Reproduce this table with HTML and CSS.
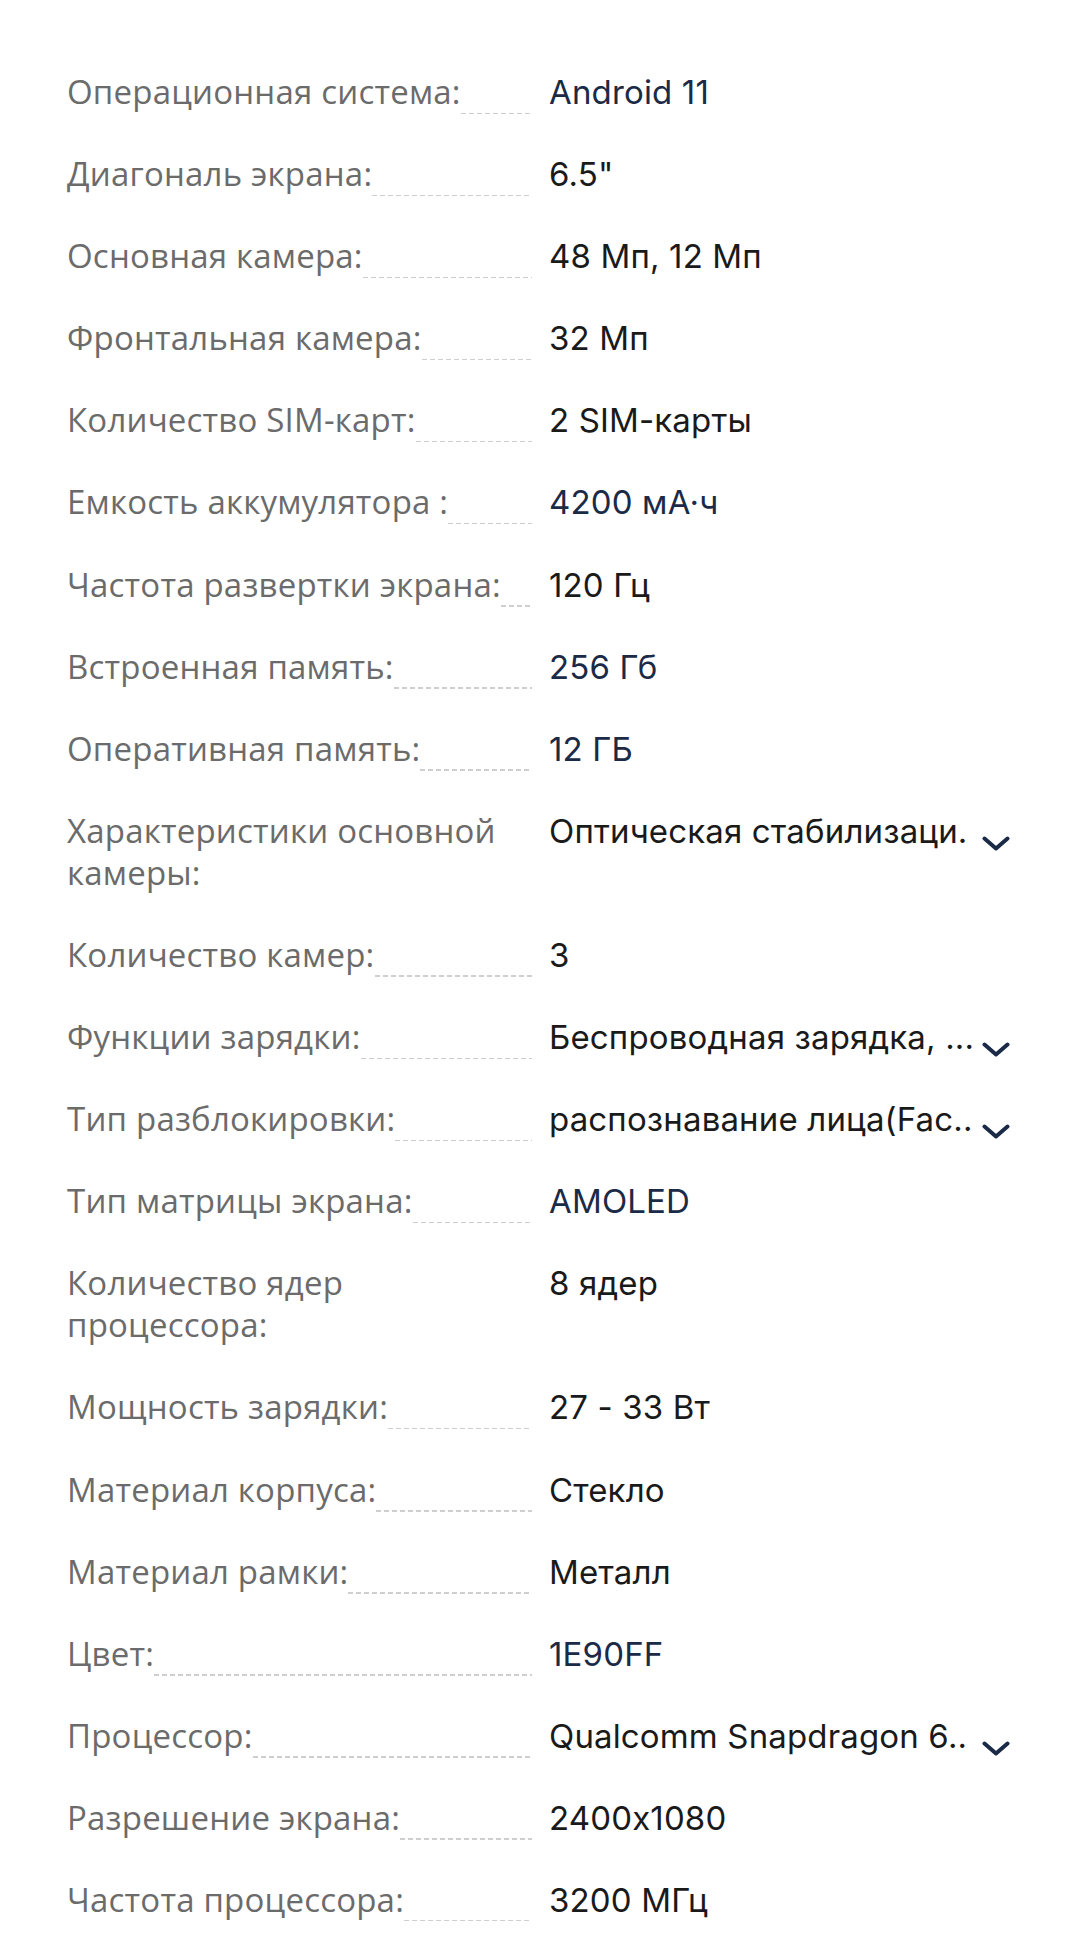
FILE: index.html
```html
<!DOCTYPE html>
<html lang="ru">
<head>
<meta charset="utf-8">
<title>Характеристики</title>
<link rel="stylesheet" href="styles.css">
</head>
<body>
<div class="specs">
  <div class="row"><div class="label"><span class="ltext">Операционная система:</span><span class="dots"></span></div><div class="value"><span class="vtext link">Android 11</span></div></div>
  <div class="row"><div class="label"><span class="ltext">Диагональ экрана:</span><span class="dots"></span></div><div class="value"><span class="vtext">6.5"</span></div></div>
  <div class="row"><div class="label"><span class="ltext">Основная камера:</span><span class="dots"></span></div><div class="value"><span class="vtext">48 Мп, 12 Мп</span></div></div>
  <div class="row"><div class="label"><span class="ltext">Фронтальная камера:</span><span class="dots"></span></div><div class="value"><span class="vtext">32 Мп</span></div></div>
  <div class="row"><div class="label"><span class="ltext">Количество SIM-карт:</span><span class="dots"></span></div><div class="value"><span class="vtext">2 SIM-карты</span></div></div>
  <div class="row"><div class="label"><span class="ltext">Емкость аккумулятора :</span><span class="dots"></span></div><div class="value"><span class="vtext link">4200 мА·ч</span></div></div>
  <div class="row"><div class="label"><span class="ltext">Частота развертки экрана:</span><span class="dots"></span></div><div class="value"><span class="vtext">120 Гц</span></div></div>
  <div class="row"><div class="label"><span class="ltext">Встроенная память:</span><span class="dots"></span></div><div class="value"><span class="vtext link">256 Гб</span></div></div>
  <div class="row"><div class="label"><span class="ltext">Оперативная память:</span><span class="dots"></span></div><div class="value"><span class="vtext link">12 ГБ</span></div></div>
  <div class="row"><div class="label"><span class="ltext">Характеристики основной камеры:</span><span class="dots"></span></div><div class="value"><span class="vtext">Оптическая стабилизаци.</span><svg class="chev" viewBox="0 0 28 15" width="28" height="15"><path d="M2.5 2.5 L14 12.5 L25.5 2.5" fill="none" stroke="#1b2a47" stroke-width="4" stroke-linecap="round" stroke-linejoin="round"/></svg></div></div>
  <div class="row"><div class="label"><span class="ltext">Количество камер:</span><span class="dots"></span></div><div class="value"><span class="vtext">3</span></div></div>
  <div class="row"><div class="label"><span class="ltext">Функции зарядки:</span><span class="dots"></span></div><div class="value"><span class="vtext">Беспроводная зарядка, ...</span><svg class="chev" viewBox="0 0 28 15" width="28" height="15"><path d="M2.5 2.5 L14 12.5 L25.5 2.5" fill="none" stroke="#1b2a47" stroke-width="4" stroke-linecap="round" stroke-linejoin="round"/></svg></div></div>
  <div class="row"><div class="label"><span class="ltext">Тип разблокировки:</span><span class="dots"></span></div><div class="value"><span class="vtext">распознавание лица(Fac..</span><svg class="chev" viewBox="0 0 28 15" width="28" height="15"><path d="M2.5 2.5 L14 12.5 L25.5 2.5" fill="none" stroke="#1b2a47" stroke-width="4" stroke-linecap="round" stroke-linejoin="round"/></svg></div></div>
  <div class="row"><div class="label"><span class="ltext">Тип матрицы экрана:</span><span class="dots"></span></div><div class="value"><span class="vtext link">AMOLED</span></div></div>
  <div class="row"><div class="label"><span class="ltext">Количество ядер процессора:</span><span class="dots"></span></div><div class="value"><span class="vtext">8 ядер</span></div></div>
  <div class="row"><div class="label"><span class="ltext">Мощность зарядки:</span><span class="dots"></span></div><div class="value"><span class="vtext">27 - 33 Вт</span></div></div>
  <div class="row"><div class="label"><span class="ltext">Материал корпуса:</span><span class="dots"></span></div><div class="value"><span class="vtext">Стекло</span></div></div>
  <div class="row"><div class="label"><span class="ltext">Материал рамки:</span><span class="dots"></span></div><div class="value"><span class="vtext">Металл</span></div></div>
  <div class="row"><div class="label"><span class="ltext">Цвет:</span><span class="dots"></span></div><div class="value"><span class="vtext link">1E90FF</span></div></div>
  <div class="row"><div class="label"><span class="ltext">Процессор:</span><span class="dots"></span></div><div class="value"><span class="vtext">Qualcomm Snapdragon 6..</span><svg class="chev" viewBox="0 0 28 15" width="28" height="15"><path d="M2.5 2.5 L14 12.5 L25.5 2.5" fill="none" stroke="#1b2a47" stroke-width="4" stroke-linecap="round" stroke-linejoin="round"/></svg></div></div>
  <div class="row"><div class="label"><span class="ltext">Разрешение экрана:</span><span class="dots"></span></div><div class="value"><span class="vtext">2400x1080</span></div></div>
  <div class="row"><div class="label"><span class="ltext">Частота процессора:</span><span class="dots"></span></div><div class="value"><span class="vtext">3200 МГц</span></div></div>
</div>
</body>
</html>
```

FILE: styles.css
```css
html, body {
  margin: 0;
  padding: 0;
  background: #ffffff;
}

.specs {
  padding: 71px 70px 0 67px;
  display: flex;
  flex-direction: column;
  gap: 40.1px;
}

.row {
  display: grid;
  grid-template-columns: 465px 1fr;
  column-gap: 17px;
  align-items: start;
}

.label {
  display: flex;
  align-items: flex-end;
  min-width: 0;
}

.ltext {
  flex: 0 1 auto;
  font-family: "Open Sans", "DejaVu Sans", sans-serif;
  font-size: 33px;
  line-height: 42px;
  color: #6b6b6b;
  letter-spacing: 0.2px;
}

.dots {
  flex: 1 1 0;
  min-width: 0;
  height: 1.5px;
  margin-bottom: -1px;
  background-image: repeating-linear-gradient(to right, #cfcfcf 0, #cfcfcf 5px, transparent 5px, transparent 8px);
}

.value {
  display: flex;
  align-items: flex-start;
  justify-content: space-between;
  min-width: 0;
  height: 42px;
}

.vtext {
  font-family: Inter, "Noto Sans", sans-serif;
  font-feature-settings: "calt" 0;
  font-size: 33px;
  line-height: 42px;
  letter-spacing: 0.15px;
  color: #1a1a1a;
  white-space: nowrap;
  overflow: hidden;
}

.vtext.link {
  color: #1b2a47;
}

.chev {
  flex: 0 0 auto;
  margin-top: 26px;
  margin-left: 6px;
}
```
